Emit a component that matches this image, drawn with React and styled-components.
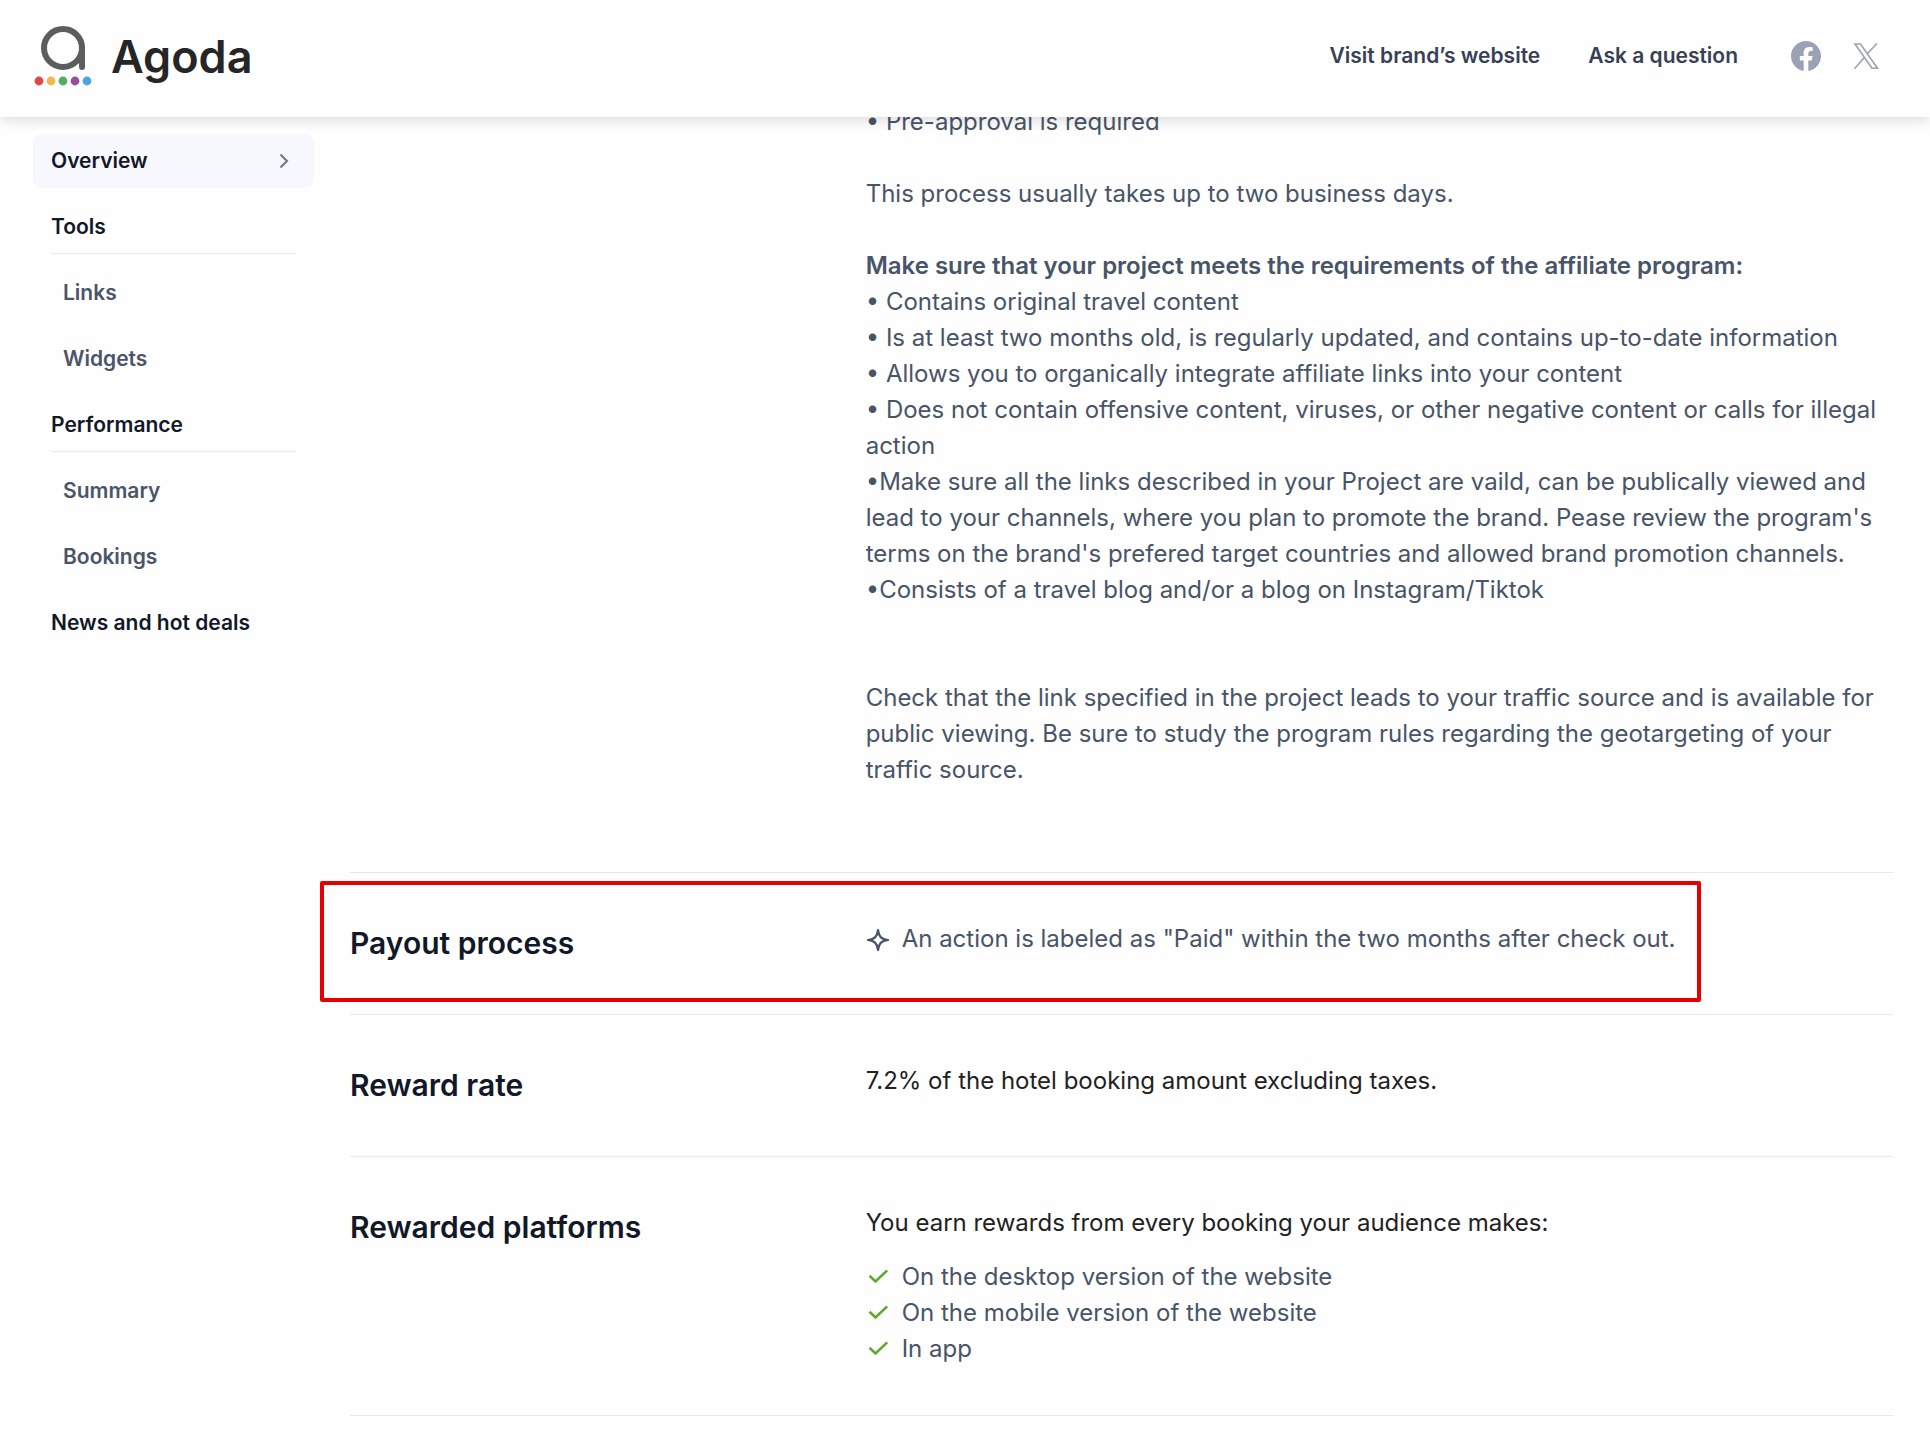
import styled, { createGlobalStyle } from 'styled-components';

const GlobalStyle = createGlobalStyle`
    * {
        box-sizing: border-box;
    }

    body {
        margin: 0;
        background-color: #fefefe;
        color: #485468;
        font-family: Inter, "Liberation Sans", sans-serif;
        font-size: 24px;
        line-height: 36px;
        -webkit-font-smoothing: antialiased;
    }

    h1, h2, p, ul {
        margin: 0;
        padding: 0;
    }

    a {
        color: inherit;
        text-decoration: none;
    }

    b {
        font-weight: 600;
    }
`

const Header = styled.header`
    position: sticky;
    top: 0;
    z-index: 1;
    display: flex;
    justify-content: space-between;
    height: 117px;
    padding: 24px 49px 0 33px;
    background-color: #fefefe;
    box-shadow: 0 3px 12px rgba(0, 0, 0, 0.14);
`

const Brand = styled.div`
    display: flex;
    gap: 18px;
    height: 66px;
    align-items: center;

    h1 {
        color: #262626;
        font-size: 45px;
        font-weight: 600;
        line-height: 54px;
    }
`

const HeaderLinks = styled.nav`
    display: flex;
    align-items: center;
    height: 64px;
    gap: 48px;
    color: #374155;
    font-size: 21px;
    font-weight: 600;
`

const Social = styled.div`
    display: flex;
    gap: 30px;
    padding-left: 5px;
    color: #9ba2b4;

    a {
        display: flex;
    }
`

const Page = styled.div`
    display: flex;
    align-items: flex-start;
    gap: 36px;
    padding-right: 37px;
    padding-left: 33px;
`

const Sidebar = styled.nav`
    position: sticky;
    top: 117px;
    display: flex;
    flex-direction: column;
    flex-shrink: 0;
    gap: 12px;
    width: 281px;
    padding-top: 17px;
    font-size: 21px;
    font-weight: 600;
`

const MenuLink = styled.a`
    display: flex;
    align-items: center;
    justify-content: space-between;
    height: 54px;
    padding: 0 21px 0 ${({ $nested }) => ($nested ? '30px' : '18px')};
    border-radius: 9px;
    background-color: ${({ $active }) => ($active ? '#f7f8fe' : 'transparent')};
    color: ${({ $nested }) => ($nested ? '#4b5568' : '#121828')};
`

const MenuTitle = styled.div`
    height: 54px;
    margin: 0 18px;
    border-bottom: 1px solid #e9e9ea;
    color: #121828;
    line-height: 54px;
`

/* the page is scrolled, so the first line is partly under the header */
const Content = styled.main`
    flex: 1;
    min-width: 0;
    margin-top: -13px;
`

const Section = styled.section`
    position: relative;
    display: grid;
    grid-template-columns: 1fr 2fr;
    column-gap: 2px;
    padding: ${({ $first }) => ($first ? '0' : '48px')} 0 48px;
    border-bottom: 1px solid #e9e9ea;
`

const Title = styled.h2`
    color: #121828;
    font-size: 30px;
    font-weight: 600;
    line-height: 45px;
`

const Description = styled.p`
    grid-column: 2;
    padding-bottom: 36px;
    white-space: pre-line;
`

const Lead = styled.p`
    color: #222;
`

const List = styled.ul`
    list-style: none;

    ${Lead} + & {
        margin-top: 18px;
    }

    li {
        display: flex;
        gap: 12px;
    }

    svg {
        flex-shrink: 0;
        margin-top: 6px;
    }
`

const Highlight = styled.div`
    position: absolute;
    top: 8px;
    right: 192px;
    bottom: 12px;
    left: -30px;
    border: 4px solid #e60000;
    border-radius: 2px;
    pointer-events: none;
`

function Logo() {
    return (
        <svg width="60" height="66" viewBox="0 0 60 66" fill="none" aria-hidden="true">
            <circle cx="30" cy="24" r="19" stroke="#5b5e5d" strokeWidth="6" />
            <path d="M49 24v19" stroke="#5b5e5d" strokeWidth="6" strokeLinecap="round" />
            <circle cx="6" cy="57" r="4.4" fill="#e04848" />
            <circle cx="18" cy="57" r="4.4" fill="#f3b847" />
            <circle cx="30" cy="57" r="4.4" fill="#52ae62" />
            <circle cx="42" cy="57" r="4.4" fill="#974f9b" />
            <circle cx="54" cy="57" r="4.4" fill="#4ba5dd" />
        </svg>
    )
}

function Check() {
    return (
        <svg width="24" height="24" viewBox="0 0 24 24" fill="none" aria-hidden="true">
            <path d="M3.500 10.800l6 5.700L21.200 5.400" stroke="#62a830" strokeWidth="2.600" />
        </svg>
    )
}

function Sparkle() {
    return (
        <svg width="24" height="24" viewBox="0 0 24 24" fill="none" aria-hidden="true">
            <path
                d="M12 3c.8 6.500 3.200 9.200 10 10-6.800.8-9.200 3.500-10 10-.8-6.500-3.200-9.200-10-10 6.800-.8 9.200-3.500 10-10z"
                stroke="#4b5568"
                strokeWidth="2.200"
                strokeLinejoin="round"
            />
        </svg>
    )
}

const requirements = `• Pre-approval is required

This process usually takes up to two business days.

`

const rules = `
• Contains original travel content
• Is at least two months old, is regularly updated, and contains up-to-date information
• Allows you to organically integrate affiliate links into your content
• Does not contain offensive content, viruses, or other negative content or calls for illegal action
•Make sure all the links described in your Project are vaild, can be publically viewed and lead to your channels, where you plan to promote the brand. Pease review the program's terms on the brand's prefered target countries and allowed brand promotion channels.
•Consists of a travel blog and/or a blog on Instagram/Tiktok


Check that the link specified in the project leads to your traffic source and is available for public viewing. Be sure to study the program rules regarding the geotargeting of your traffic source.`

const platforms = [
    'On the desktop version of the website',
    'On the mobile version of the website',
    'In app',
]

export default function App() {
    return (
        <>
            <GlobalStyle />
            <Header>
                <Brand>
                    <Logo />
                    <h1>Agoda</h1>
                </Brand>
                <HeaderLinks>
                    <a href="#website">Visit brand’s website</a>
                    <a href="#question">Ask a question</a>
                    <Social>
                        <a href="#facebook" aria-label="Facebook">
                            <svg width="30" height="30" viewBox="0 0 24 24" fill="currentColor">
                                <path d="M24 12.073C24 5.405 18.627 0 12 0S0 5.405 0 12.073C0 18.099 4.388 23.094 10.125 24v-8.437H7.078v-3.490h3.047V9.413c0-3.026 1.792-4.697 4.533-4.697 1.312 0 2.686.236 2.686.236v2.971H15.830c-1.491 0-1.956.931-1.956 1.886v2.264h3.328l-.532 3.490h-2.796V24C19.612 23.094 24 18.099 24 12.073z" />
                            </svg>
                        </a>
                        <a href="#x" aria-label="X">
                            <svg width="30" height="30" viewBox="0 0 30 30" fill="none" stroke="currentColor" strokeWidth="1.600">
                                <path d="M4 3h5.500l17 24.200H21z" />
                                <path d="M26 2.500L16.300 12.800M13.300 16.500L3.500 27.700" />
                            </svg>
                        </a>
                    </Social>
                </HeaderLinks>
            </Header>
            <Page>
                <Sidebar>
                    <MenuLink href="#overview" $active>
                        Overview
                        <svg width="20" height="20" viewBox="0 0 20 20" fill="none" aria-hidden="true">
                            <path d="M7.500 3.500l6.500 6.500-6.500 6.500" stroke="#6b7488" strokeWidth="2" />
                        </svg>
                    </MenuLink>
                    <MenuTitle>Tools</MenuTitle>
                    <MenuLink href="#links" $nested>Links</MenuLink>
                    <MenuLink href="#widgets" $nested>Widgets</MenuLink>
                    <MenuTitle>Performance</MenuTitle>
                    <MenuLink href="#summary" $nested>Summary</MenuLink>
                    <MenuLink href="#bookings" $nested>Bookings</MenuLink>
                    <MenuLink href="#news">News and hot deals</MenuLink>
                </Sidebar>
                <Content>
                    <Section $first>
                        <Description>
                            {requirements}
                            <b>Make sure that your project meets the requirements of the affiliate program:</b>
                            {rules}
                        </Description>
                    </Section>
                    <Section>
                        <Title>Payout process</Title>
                        <List>
                            <li>
                                <Sparkle />
                                An action is labeled as "Paid" within the two months after check out.
                            </li>
                        </List>
                        <Highlight />
                    </Section>
                    <Section>
                        <Title>Reward rate</Title>
                        <Lead>7.2% of the hotel booking amount excluding taxes.</Lead>
                    </Section>
                    <Section>
                        <Title>Rewarded platforms</Title>
                        <div>
                            <Lead>You earn rewards from every booking your audience makes:</Lead>
                            <List>
                                {platforms.map((platform) => (
                                    <li key={platform}>
                                        <Check />
                                        {platform}
                                    </li>
                                ))}
                            </List>
                        </div>
                    </Section>
                </Content>
            </Page>
        </>
    )
}
